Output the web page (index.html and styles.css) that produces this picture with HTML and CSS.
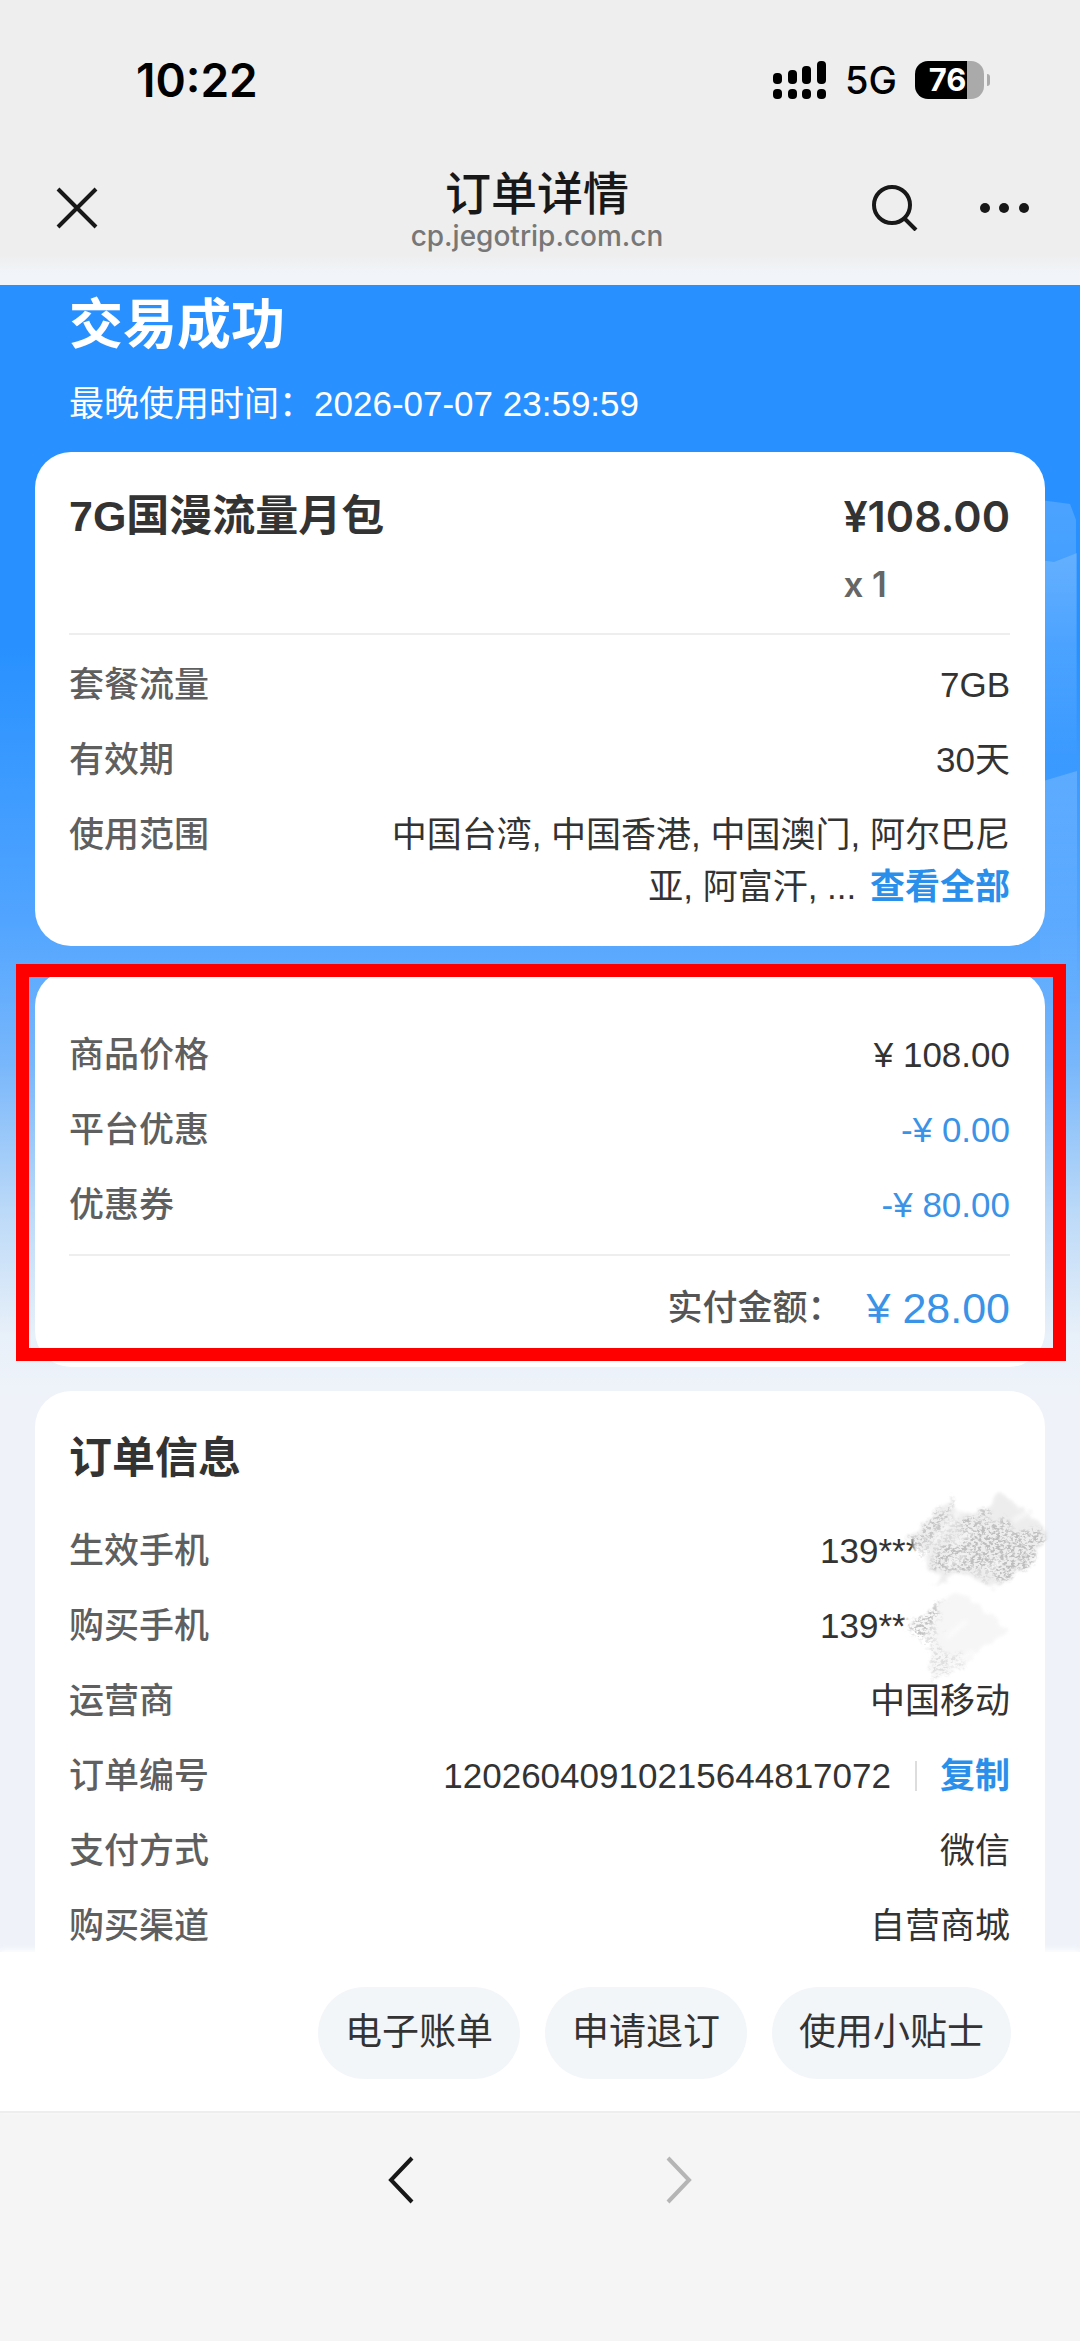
FILE: index.html
```html
<!DOCTYPE html>
<html lang="zh-CN">
<head>
<meta charset="utf-8">
<meta name="viewport" content="width=device-width, initial-scale=1">
<title>订单详情</title>
<link rel="stylesheet" href="styles.css">
</head>
<body>
<header class="top">
  <div class="status">
    <span class="time">10:22</span>
    <div class="status-right">
      <svg class="signal" viewBox="0 0 54 38" aria-hidden="true">
        <rect x="0" y="12" width="9" height="11" rx="4"/><rect x="15" y="9" width="9" height="14" rx="4"/><rect x="29" y="5" width="9" height="18" rx="4"/><rect x="44" y="0" width="9" height="23" rx="4"/>
        <rect x="0" y="28" width="9" height="10" rx="4"/><rect x="15" y="28" width="9" height="10" rx="4"/><rect x="29" y="28" width="9" height="10" rx="4"/><rect x="44" y="28" width="9" height="10" rx="4"/>
      </svg>
      <span class="network">5G</span>
      <span class="battery"><span class="battery-body">76</span><span class="battery-tip"></span></span>
    </div>
  </div>
  <nav class="navbar">
    <button class="icon-btn close" aria-label="关闭"><svg width="42" height="42" viewBox="0 0 42 42"><path d="M2 2 40 40M40 2 2 40"/></svg></button>
    <div class="heading">
      <h1>订单详情</h1>
      <p>cp.jegotrip.com.cn</p>
    </div>
    <div class="nav-right">
      <button class="icon-btn" aria-label="搜索"><svg width="46" height="46" viewBox="0 0 46 46"><circle cx="20" cy="20" r="18"/><path d="m32 33 12 12"/></svg></button>
      <button class="icon-btn" aria-label="更多"><svg class="dots" width="50" height="46" viewBox="0 0 50 46"><circle cx="5" cy="23" r="5"/><circle cx="24" cy="23" r="5"/><circle cx="44" cy="23" r="5"/></svg></button>
    </div>
  </nav>
</header>

<main class="order">
  <svg class="facets" viewBox="0 0 40 500" aria-hidden="true">
    <defs>
      <linearGradient id="fade" x2="0" y2="1"><stop stop-color="#fff" stop-opacity=".17"/><stop offset="1" stop-color="#fff" stop-opacity="0"/></linearGradient>
    </defs>
    <path fill="url(#fade)" d="M0 0 30 4 36 20V260H0Z"/>
    <path fill="url(#fade)" d="M0 60 14 62 37 53V270H0Z"/>
    <path fill="url(#fade)" d="M0 282 37 271V500H0Z"/>
  </svg>
  <section class="result">
    <h2>交易成功</h2>
    <p>最晚使用时间：<span>2026-07-07 23:59:59</span></p>
  </section>

  <section class="card product">
    <div class="product-head">
      <h3>7G国漫流量月包</h3>
      <div class="price"><strong>¥108.00</strong><span>x 1</span></div>
    </div>
    <dl class="rows">
      <div><dt>套餐流量</dt><dd>7GB</dd></div>
      <div><dt>有效期</dt><dd>30天</dd></div>
      <div class="scope"><dt>使用范围</dt><dd>中国台湾, 中国香港, 中国澳门, 阿尔巴尼亚, 阿富汗, ... <a href="#all">查看全部</a></dd></div>
    </dl>
  </section>

  <section class="card payment">
    <dl class="rows">
      <div><dt>商品价格</dt><dd>¥ 108.00</dd></div>
      <div><dt>平台优惠</dt><dd class="blue">-¥ 0.00</dd></div>
      <div><dt>优惠券</dt><dd class="blue">-¥ 80.00</dd></div>
    </dl>
    <p class="total">实付金额：<strong>¥ 28.00</strong></p>
    <div class="marker"></div>
  </section>

  <section class="card info">
    <h3>订单信息</h3>
    <dl class="rows">
      <div><dt>生效手机</dt><dd class="masked">139***</dd></div>
      <div><dt>购买手机</dt><dd class="masked">139***</dd></div>
      <div><dt>运营商</dt><dd>中国移动</dd></div>
      <div><dt>订单编号</dt><dd class="number">12026040910215644817072<button class="copy">复制</button></dd></div>
      <div><dt>支付方式</dt><dd>微信</dd></div>
      <div><dt>购买渠道</dt><dd>自营商城</dd></div>
    </dl>
    <svg class="scribble" viewBox="300 40 480 620" aria-hidden="true">
      <defs>
        <filter id="grain" x="-10%" y="-10%" width="120%" height="120%">
          <feTurbulence type="fractalNoise" baseFrequency="0.09 0.13" numOctaves="3" seed="4" result="n"/>
          <feColorMatrix in="n" type="matrix" values="0 0 0 0 .42  0 0 0 0 .42  0 0 0 0 .42  5 0 0 0 -2.2" result="g"/>
          <feTurbulence type="fractalNoise" baseFrequency="0.03" numOctaves="3" seed="9" result="m"/>
          <feDisplacementMap in="SourceGraphic" in2="m" scale="70" xChannelSelector="R" yChannelSelector="G" result="d"/>
          <feGaussianBlur in="d" stdDeviation="4" result="b"/>
          <feComposite in="g" in2="b" operator="in"/>
        </filter>
        <filter id="rough" x="-10%" y="-10%" width="120%" height="120%">
          <feTurbulence type="fractalNoise" baseFrequency="0.03" numOctaves="3" seed="9" result="m"/>
          <feDisplacementMap in="SourceGraphic" in2="m" scale="40" xChannelSelector="R" yChannelSelector="G" result="d"/>
          <feGaussianBlur in="d" stdDeviation="5"/>
        </filter>
        <filter id="soft"><feGaussianBlur stdDeviation="7"/></filter>
      </defs>
      <path class="cover" filter="url(#soft)" d="M345 195 460 110 700 140V310L480 330 340 245ZM310 425 420 375 630 400V500L420 620 330 500Z"/>
      <path class="wash" filter="url(#rough)" d="M320 200 460 80 450 120 560 125 600 62 660 110 715 155 750 190 690 280 600 350 480 310 400 350 425 318 370 290 380 240 340 230Z"/>
      <path class="wash faint" filter="url(#rough)" d="M325 470 455 365 540 400 620 480 500 570 410 632 380 585 395 510Z"/>
      <path class="grain" filter="url(#grain)" d="M320 210 465 80 440 160 350 245ZM470 150 560 125 630 160 640 190 700 170 735 205 700 270 620 330 540 290 480 300 400 300 420 230 490 210Z"/>
      <path class="grain light" filter="url(#grain)" d="M345 235 460 140 740 190 690 280 600 340 480 300 390 290Z"/>
      <path class="grain" filter="url(#grain)" d="M315 480 415 400 405 450 350 500Z"/>
      <path class="grain light" filter="url(#grain)" d="M330 480 430 385 410 520 430 560 500 560 405 640 380 590 390 520Z"/>
      <path class="streaks" filter="url(#soft)" d="M400 215 480 120M455 225 520 180M440 285 500 250M560 300 600 270M640 150 690 120M440 500 500 450M450 590 520 540"/>
    </svg>
  </section>
</main>

<div class="actions">
  <button>电子账单</button>
  <button>申请退订</button>
  <button>使用小贴士</button>
</div>

<footer class="browser-bar">
  <button class="icon-btn" aria-label="后退"><svg width="26" height="48" viewBox="0 0 26 48"><path d="M24 2 3 24 24 46"/></svg></button>
  <button class="icon-btn forward" aria-label="前进" disabled><svg width="26" height="48" viewBox="0 0 26 48"><path d="m2 2 21 22L2 46"/></svg></button>
</footer>
</body>
</html>
```
FILE: styles.css
```css
* { box-sizing: border-box; }
body, h1, h2, h3, p, dl, dd { margin: 0; }
html { background: #f5f5f5; }
body {
  color: #333;
  font: 35px/52px "Liberation Sans", "Noto Sans CJK SC", sans-serif;
}
button {
  padding: 0;
  border: 0;
  background: none;
  color: inherit;
  font: inherit;
}
a { text-decoration: none; }

/* status and title bars */
.top {
  padding-top: 50px;
  background: linear-gradient(#eee 255px, #f1f5fa 275px);
}
.status {
  display: flex;
  align-items: center;
  justify-content: space-between;
  height: 60px;
  padding: 0 90px 0 136px;
  color: #000;
}
.time { font: 600 46px/60px Inter, sans-serif; }
.status-right { display: flex; align-items: center; }
.signal { width: 54px; height: 38px; }
.network { margin: 0 18px; font: 500 38px/60px Inter, sans-serif; }
.battery { display: flex; align-items: center; gap: 3px; }
.battery-body {
  width: 69px;
  padding-right: 4px;
  border-radius: 13px;
  background: linear-gradient(90deg, #000 52px, #aaa 52px);
  color: #fff;
  font: 700 31px/38px Inter, sans-serif;
  text-align: center;
}
.battery-tip { width: 3px; height: 12px; border-radius: 0 3px 3px 0; background: #aaa; }

.navbar {
  display: grid;
  grid-template-columns: 1fr auto 1fr;
  align-items: center;
  height: 175px;
  padding: 20px 50px 0 44px;
}
.icon-btn { display: flex; justify-self: start; }
.close { padding-left: 12px; }
.icon-btn svg { fill: none; stroke: #181818; stroke-width: 4; }
.icon-btn .dots { fill: #181818; stroke: none; }
.heading { text-align: center; }
.heading h1 { font-size: 46px; font-weight: 500; line-height: 56px; color: #181818; }
.heading p { font: 500 28px/28px Inter, sans-serif; color: #777; }
.nav-right { display: flex; justify-content: flex-end; gap: 62px; }

/* order page */
.order {
  position: relative;
  padding: 0 35px;
  background: linear-gradient(#2891ff 360px, #52a5ff 640px, #79b7fb 780px, #b9d8f8 920px, #e8f0f9 1050px, #eff3f9 1110px);
}
.facets { position: absolute; top: 215px; right: 0; width: 40px; height: 500px; }
.result { padding: 4px 34px 22px; color: #fff; }
.result h2 { font-size: 54px; font-weight: 700; line-height: 72px; }
.result p { padding-top: 17px; }

.card {
  position: relative;
  margin-bottom: 24px;
  padding: 0 35px 0 34px;
  border-radius: 36px;
  background: #fff;
}
.card h3 { font-size: 43px; font-weight: 700; line-height: 52px; }
.product { padding-top: 38px; padding-bottom: 33px; }
.product-head {
  display: flex;
  justify-content: space-between;
  margin-bottom: 24px;
  padding-bottom: 23px;
  border-bottom: 2px solid #eee;
}
.price { display: flex; flex-direction: column; gap: 16px; }
.price strong { font: 600 43px/52px Inter, sans-serif; }
.price span { font: 600 35px/52px Inter, sans-serif; color: #666; }

.rows { display: flex; flex-direction: column; gap: 23px; }
.rows > div { display: flex; justify-content: space-between; }
.rows dt { color: #5f5f5f; font-weight: 500; }
.rows dd { text-align: right; }
.scope dd { width: 640px; }
.scope a { margin-left: 4px; }
.rows a, .copy { color: #2a8feb; font-weight: 700; }

.payment { padding-top: 59px; }
.rows .blue { color: #3a93e6; }
.total {
  display: flex;
  justify-content: flex-end;
  margin-top: 23px;
  padding: 26px 0 33px;
  border-top: 2px solid #eee;
  color: #555;
  font-weight: 500;
}
.total strong { margin-left: 24px; color: #3a93e6; font-size: 43px; font-weight: 400; }
.marker { position: absolute; inset: -6px -21px 6px -19px; border: 13px solid #f00; }

.info { margin-bottom: 0; padding-top: 41px; border-radius: 36px 36px 0 0; }
.info .rows { padding-top: 41px; }
.rows .masked { width: 190px; text-align: left; }
.number { display: flex; align-items: center; }
.copy { margin-left: 24px; padding-left: 25px; background: linear-gradient(#ddd, #ddd) 0 center / 2px 30px no-repeat; }
.scribble { position: absolute; top: 93px; right: -15px; width: 160px; height: 207px; }
.cover { fill: #fff; }
.wash { fill: #ddd; opacity: .5; }
.wash.faint { fill: #eee; }
.grain { fill: #000; opacity: .6; }
.grain.light { opacity: .3; }
.streaks { fill: none; stroke: #fff; stroke-width: 14; opacity: .6; }

/* bottom bars */
.actions {
  position: relative;
  display: flex;
  justify-content: flex-end;
  gap: 25px;
  padding: 35px 69px 32px;
  border-bottom: 2px solid #eee;
  background: #fff;
  box-shadow: 0 -2px 6px #fff;
}
.actions button {
  padding: 0 27px;
  border-radius: 46px;
  background: #f3f6f9;
  font-size: 37px;
  line-height: 92px;
}
.browser-bar {
  display: flex;
  justify-content: center;
  gap: 252px;
  padding: 43px 0 130px;
  background: #f5f5f5;
}
.forward svg { stroke: #b5b5b5; }
```
